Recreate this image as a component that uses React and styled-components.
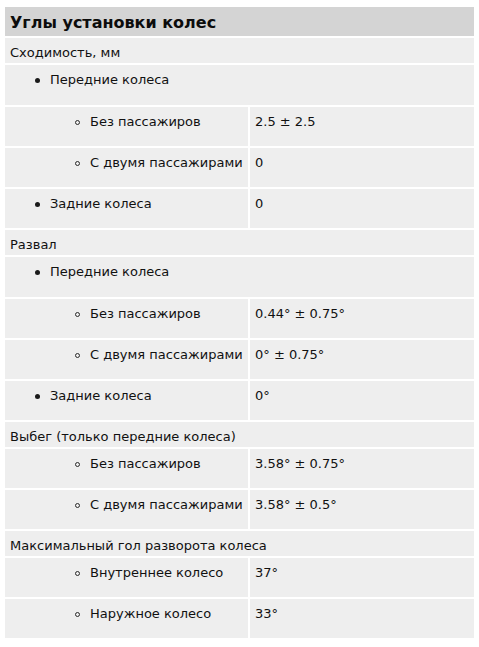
import React from "react";
import styled, { createGlobalStyle } from "styled-components";

const Global = createGlobalStyle`
  html, body { margin: 0; padding: 0; background: #fff; }
  body { font-family: "DejaVu Sans", Verdana, sans-serif; color: #111; }
`;

const Page = styled.div`
  padding: 7px 5px 0 5px;
  width: 469px;
`;

const Title = styled.h2`
  margin: 0 0 2px 0;
  background: #d4d4d4;
  height: 29px;
  line-height: 31px;
  padding: 0 5px;
  font-size: 16px;
  font-weight: bold;
  color: #0c0c0c;
`;

const Grid = styled.div`
  display: grid;
  grid-template-columns: 243px 224px;
  gap: 2px;
`;

const heights = { cat: "2px", group: "17px", data: "16px" };

const Cell = styled.div`
  background: #eeeeee;
  font-size: 13px;
  line-height: 16px;
  padding: 7px 5px ${(p) => heights[p.$kind || "data"]} 5px;
  grid-column: ${(p) => (p.$span ? "1 / span 2" : "auto")};
  display: flex;
  align-items: flex-start;
  white-space: nowrap;
`;

const Item = styled.span`
  display: flex;
  align-items: center;
  padding-left: ${(p) => (p.$level === 2 ? "65px" : "25px")};
`;

const Marker = styled.span`
  width: 5px;
  height: 5px;
  box-sizing: border-box;
  border-radius: 50%;
  margin-right: 10px;
  background: ${(p) => (p.$ring ? "transparent" : "#1a1a1a")};
  border: ${(p) => (p.$ring ? "1.3px solid #2a2a2a" : "none")};
  flex: none;
`;

const Category = ({ children }) => (
  <Cell $span $kind="cat">
    {children}
  </Cell>
);

const Group = ({ label }) => (
  <Cell $span $kind="group">
    <Item $level={1}>
      <Marker />
      {label}
    </Item>
  </Cell>
);

const Row = ({ label, value, level = 2 }) => (
  <>
    <Cell>
      <Item $level={level}>
        <Marker $ring={level === 2} />
        {label}
      </Item>
    </Cell>
    <Cell>{value}</Cell>
  </>
);

export default function App() {
  return (
    <>
      <Global />
      <Page>
        <Title>Углы установки колес</Title>
        <Grid>
          <Category>Сходимость, мм</Category>
          <Group label="Передние колеса" />
          <Row label="Без пассажиров" value="2.5 ± 2.5" />
          <Row label="С двумя пассажирами" value="0" />
          <Row label="Задние колеса" value="0" level={1} />
          <Category>Развал</Category>
          <Group label="Передние колеса" />
          <Row label="Без пассажиров" value="0.44° ± 0.75°" />
          <Row label="С двумя пассажирами" value="0° ± 0.75°" />
          <Row label="Задние колеса" value="0°" level={1} />
          <Category>Выбег (только передние колеса)</Category>
          <Row label="Без пассажиров" value="3.58° ± 0.75°" />
          <Row label="С двумя пассажирами" value="3.58° ± 0.5°" />
          <Category>Максимальный гол разворота колеса</Category>
          <Row label="Внутреннее колесо" value="37°" />
          <Row label="Наружное колесо" value="33°" />
        </Grid>
      </Page>
    </>
  );
}
